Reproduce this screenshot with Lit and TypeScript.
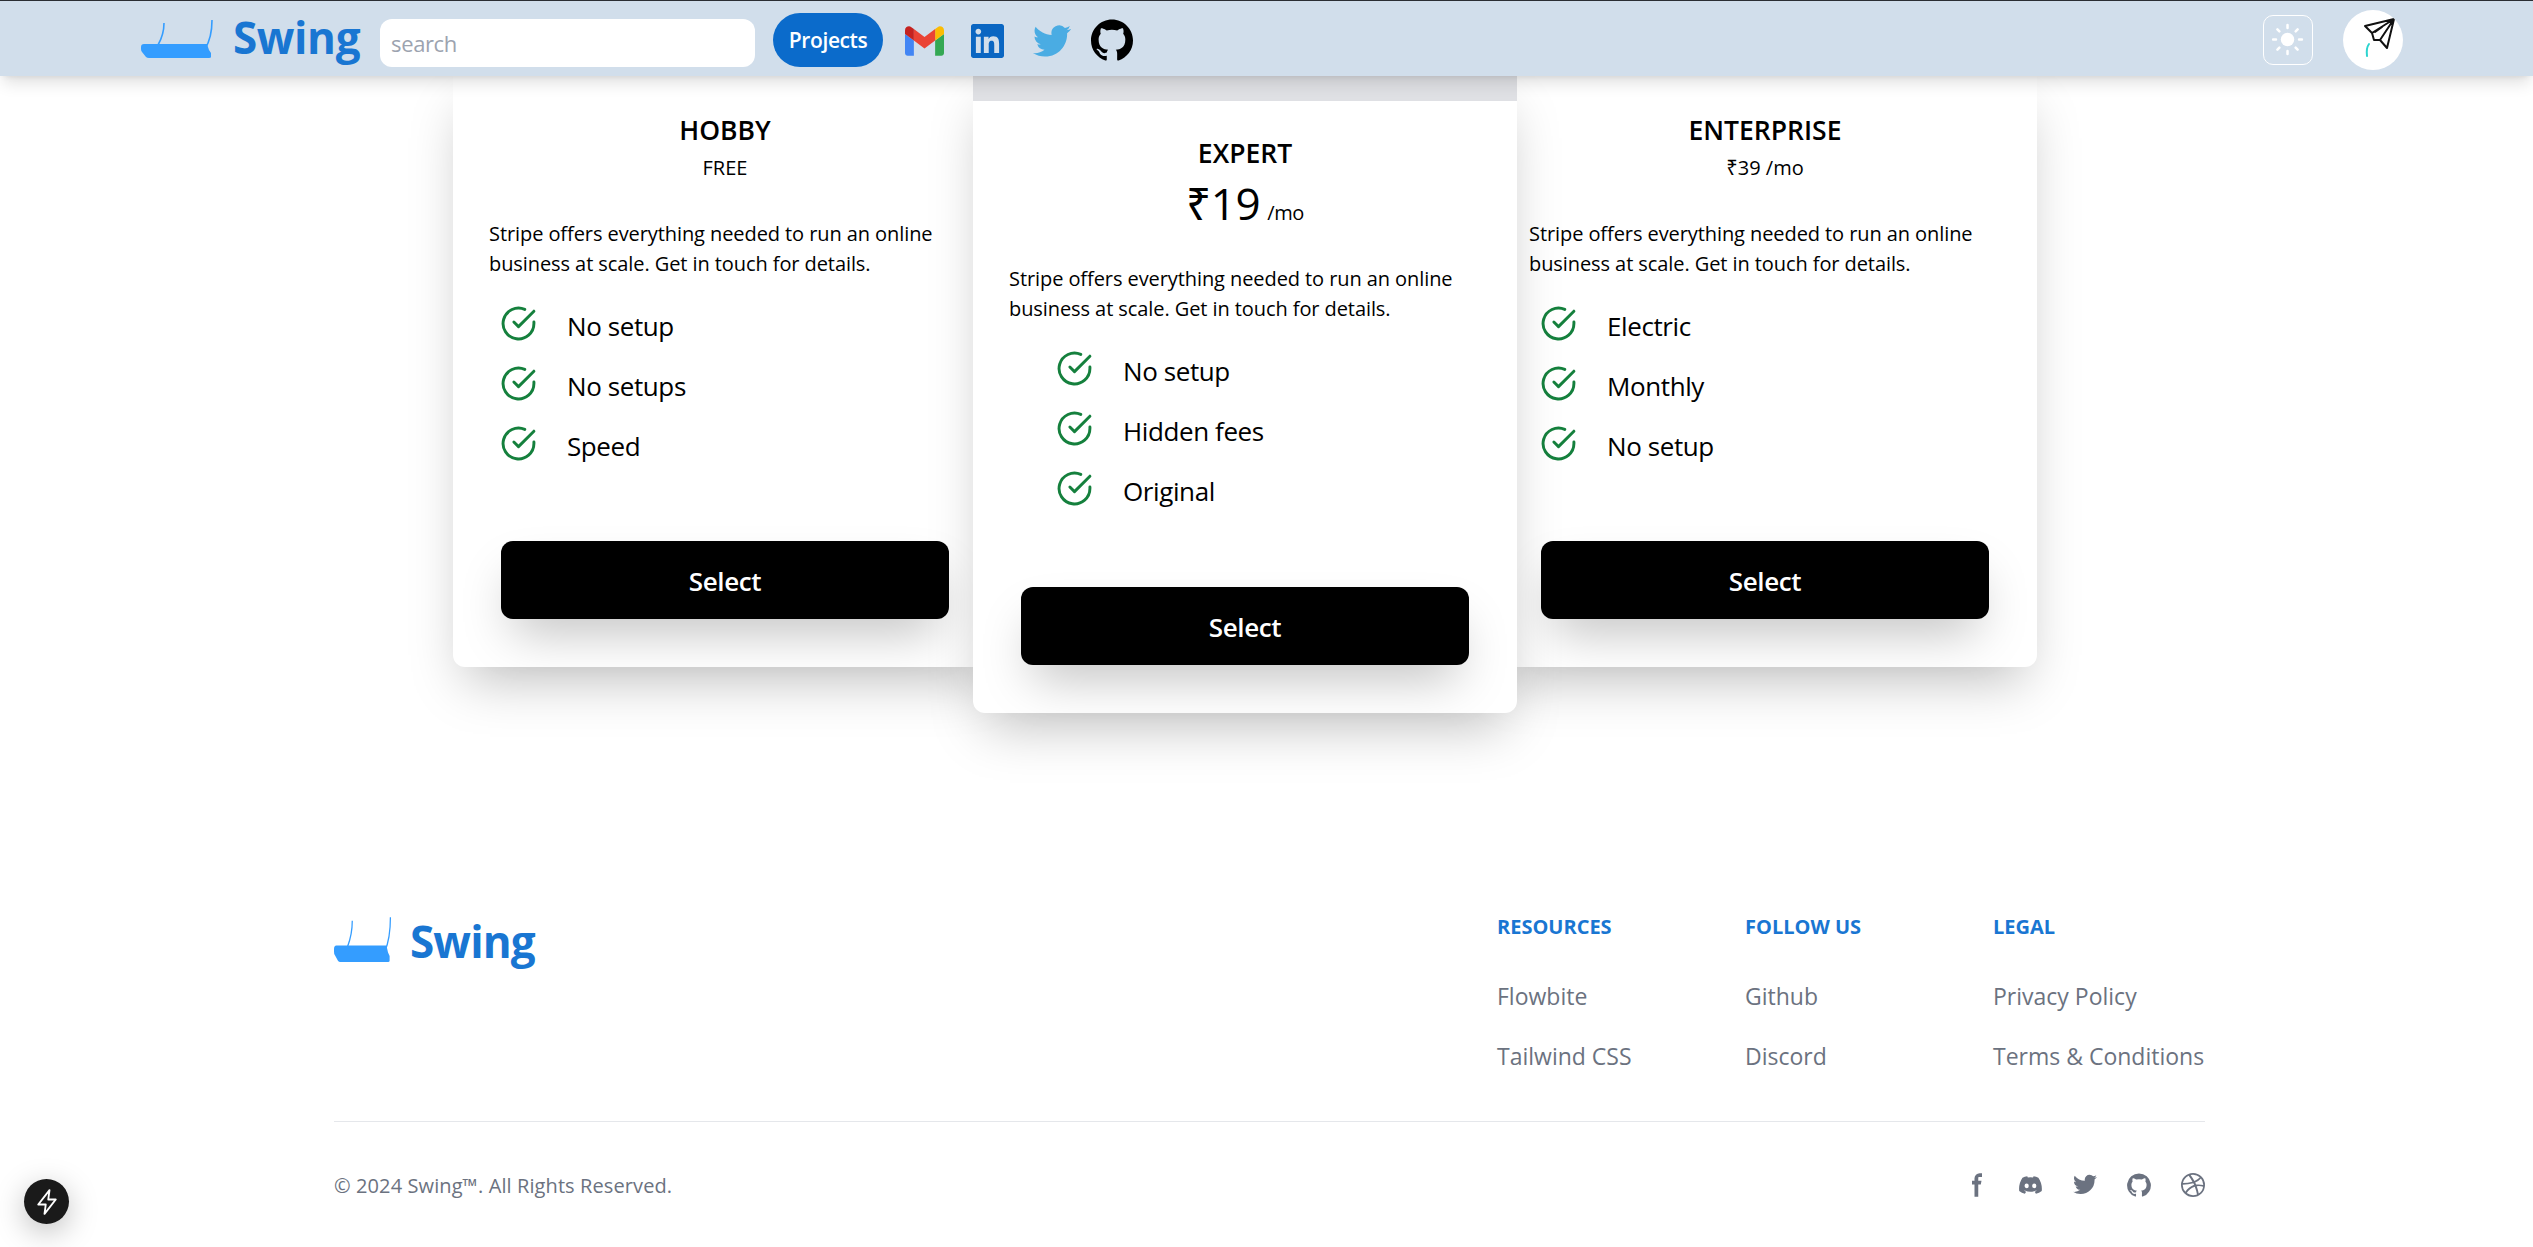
import { LitElement, html, css, svg } from "lit";
import { customElement } from "lit/decorators.js";

const check = html`<svg class="check" viewBox="0 0 24 24" fill="none" stroke="currentColor" stroke-width="1.9" stroke-linecap="round" stroke-linejoin="round"><path d="M22 11.08V12a10 10 0 1 1-5.93-9.14"/><polyline points="22 4 12 14.01 9 11.01"/></svg>`;

const logoShape = svg`<path fill="#349dff" d="M0 28Q0 25 3 25H66L68 31L70 34V38Q70 39 68 39H8Q6 39 5 38L1 33Q0 32 0 30Z"/><path fill="none" stroke="#349dff" stroke-width="1.6" d="M23 4C23 12 21 19 17 26M71 1C71 12 69 22 64 30"/>`;

const DESC = "Stripe offers everything needed to run an online business at scale. Get in touch for details.";

const socials = [
  { cls: "s-f", vb: "0 0 8 19", d: "M6.135 3H8V0H6.135a4.147 4.147 0 0 0-4.142 4.142V6H0v3h2v9.938h3V9h2.021l.592-3H5V3.591A.6.6 0 0 1 5.592 3h.543Z" },
  { cls: "s-o", vb: "0 0 21 16", d: "M16.942 1.556a16.3 16.3 0 0 0-4.126-1.3 12.04 12.04 0 0 0-.529 1.1 15.175 15.175 0 0 0-4.573 0 11.585 11.585 0 0 0-.535-1.1 16.274 16.274 0 0 0-4.129 1.3A17.392 17.392 0 0 0 .182 13.218a15.785 15.785 0 0 0 4.963 2.521c.41-.564.773-1.16 1.084-1.785a10.63 10.63 0 0 1-1.706-.83c.143-.106.283-.217.418-.33a11.664 11.664 0 0 0 10.118 0c.137.113.277.224.418.33-.544.328-1.116.606-1.71.832a12.52 12.52 0 0 0 1.084 1.785 16.46 16.46 0 0 0 5.064-2.595 17.286 17.286 0 0 0-2.973-11.59ZM6.678 10.813a1.941 1.941 0 0 1-1.8-2.045 1.93 1.93 0 0 1 1.8-2.047 1.919 1.919 0 0 1 1.8 2.047 1.93 1.93 0 0 1-1.8 2.045Zm6.644 0a1.94 1.94 0 0 1-1.8-2.045 1.93 1.93 0 0 1 1.8-2.047 1.918 1.918 0 0 1 1.8 2.047 1.93 1.93 0 0 1-1.8 2.045Z" },
  { cls: "s-o", vb: "0 0 20 17", d: "M20 1.892a8.178 8.178 0 0 1-2.355.635 4.074 4.074 0 0 0 1.8-2.235 8.344 8.344 0 0 1-2.605.98A4.13 4.13 0 0 0 13.85 0a4.068 4.068 0 0 0-4.1 4.038 4 4 0 0 0 .105.919A11.705 11.705 0 0 1 1.4.734a4.006 4.006 0 0 0 1.268 5.392 4.165 4.165 0 0 1-1.859-.5v.05A4.057 4.057 0 0 0 4.1 9.635a4.19 4.19 0 0 1-1.856.07 4.108 4.108 0 0 0 3.831 2.807A8.36 8.36 0 0 1 0 14.184 11.732 11.732 0 0 0 6.291 16 11.502 11.502 0 0 0 17.964 4.5c0-.177 0-.35-.012-.523A8.143 8.143 0 0 0 20 1.892Z" },
  { cls: "s-o", vb: "0 0 20 20", d: "M10 .333A9.911 9.911 0 0 0 6.866 19.65c.5.092.678-.215.678-.477 0-.237-.01-1.017-.014-1.845-2.757.6-3.338-1.169-3.338-1.169a2.627 2.627 0 0 0-1.1-1.451c-.9-.615.07-.6.07-.6a2.084 2.084 0 0 1 1.518 1.021 2.11 2.11 0 0 0 2.884.823c.044-.503.268-.973.63-1.325-2.2-.25-4.516-1.1-4.516-4.9A3.832 3.832 0 0 1 4.7 7.068a3.56 3.56 0 0 1 .095-2.623s.832-.266 2.726 1.016a9.409 9.409 0 0 1 4.962 0c1.89-1.282 2.717-1.016 2.717-1.016.366.83.402 1.768.1 2.623a3.827 3.827 0 0 1 1.02 2.659c0 3.807-2.319 4.644-4.525 4.889a2.366 2.366 0 0 1 .673 1.834c0 1.326-.012 2.394-.012 2.72 0 .263.18.572.681.475A9.911 9.911 0 0 0 10 .333Z" },
  { cls: "s-o", vb: "0 0 20 20", d: "M10 0a10 10 0 1 0 10 10A10.009 10.009 0 0 0 10 0Zm6.613 4.614a8.523 8.523 0 0 1 1.93 5.32 20.094 20.094 0 0 0-5.949-.274c-.059-.149-.122-.292-.184-.441a23.879 23.879 0 0 0-.566-1.239 11.41 11.41 0 0 0 4.769-3.366ZM8 1.707a8.821 8.821 0 0 1 2-.238 8.5 8.5 0 0 1 5.664 2.152 9.608 9.608 0 0 1-4.476 3.087A45.758 45.758 0 0 0 8 1.707ZM1.642 8.262a8.57 8.57 0 0 1 4.73-5.981A53.998 53.998 0 0 1 9.54 7.222a32.078 32.078 0 0 1-7.9 1.04h.002Zm2.01 7.46a8.51 8.51 0 0 1-2.2-5.707v-.262a31.64 31.64 0 0 0 8.777-1.219c.243.477.477.964.692 1.449-.114.032-.227.067-.336.1a13.569 13.569 0 0 0-6.942 5.636l.009.003ZM10 18.556a8.508 8.508 0 0 1-5.243-1.8 11.717 11.717 0 0 1 6.7-5.332.509.509 0 0 1 .055-.02 35.65 35.65 0 0 1 1.819 6.476 8.476 8.476 0 0 1-3.331.676Zm4.772-1.462A37.232 37.232 0 0 0 13.113 11a12.513 12.513 0 0 1 5.321.364 8.56 8.56 0 0 1-3.66 5.73h-.002Z" },
];

@customElement("app-root")
export class AppRoot extends LitElement {
  static styles = css`
    :host { display: block; height: 1247px; overflow: hidden; position: relative; background: #fff; color: #000;
      font-family: "Open Sans", "Noto Sans", sans-serif; letter-spacing: -0.025em; }
    * { box-sizing: border-box; }
    .nav { position: relative; z-index: 5; height: 76px; background: #d1deeb; border-top: 1px solid #2a2d33;
      box-shadow: 0 10px 15px -3px rgba(0,0,0,.12), 0 4px 6px -4px rgba(0,0,0,.1);
      display: flex; align-items: center; padding: 0 130px 0 141px; }
    .nav-logo { width: 73px; height: 39px; margin-top: -1px; }
    .brand { font-size: 44px; font-weight: 700; color: #1976d2; line-height: 1; }
    .nav .brand { margin: -3px 20px 0 19px; }
    .search { width: 375px; height: 48px; margin-top: 8px; border-radius: 12px; background: #fff; padding: 0 11px;
      display: flex; align-items: center; color: #9ca3af; font-size: 22px; margin-right: 18px; }
    .pill { width: 110px; height: 54px; margin-top: 2px; border-radius: 27px; background: #0b6bcb; color: #fff; font-size: 21px; font-weight: 600;
      display: flex; align-items: center; justify-content: center; margin-right: 22px; }
    .gmail { width: 39px; height: 30px; margin: 4px 27px 0 0; }
    .li { width: 33px; height: 34px; margin: 4px 29px 0 0; }
    .tw { width: 38px; height: 32px; margin: 5px 20px 0 0; }
    .gh { width: 42px; height: 42px; margin-top: 2px; }
    .spacer { flex: 1; }
    .theme { width: 50px; height: 50px; border: 1px solid #fff; border-radius: 10px; margin: 2px 30px 0 0; }
    .avatar { width: 60px; height: 60px; border-radius: 50%; background: #fff; margin-top: 2px; }

    .cards { display: flex; align-items: flex-start; padding-left: 453px; }
    .card { width: 544px; flex: none; background: #fff; border-radius: 0 0 12px 12px; box-shadow: 0 25px 50px -12px rgba(0,0,0,.25); }
    .side { padding: 36px 48px 48px 36px; height: 591px; }
    .mid { position: relative; z-index: 2; margin: 0 -24px; height: 637px; }
    .band { height: 25px; background: #dfe0e4; }
    .mid-body { padding: 34px 48px 48px 36px; }
    .head { text-align: center; margin-right: -12px; }
    .title { font-size: 26.5px; font-weight: 600; line-height: 36px; letter-spacing: 0; }
    .sub { font-size: 20px; line-height: 28px; margin-top: 6px; letter-spacing: 0; }
    .price { font-size: 44px; line-height: 64px; height: 64px; }
    .price small { font-size: 20px; line-height: 1; margin-left: -4px; }
    .desc { font-size: 20px; line-height: 30px; margin: 37px 0 17px; letter-spacing: -0.08px; }
    .mid .desc { margin-top: 29px; }
    .list { list-style: none; margin: 0; padding: 0 0 0 13px; }
    .mid .list { padding-left: 49px; }
    .row { height: 60px; display: flex; align-items: center; font-size: 26px; color: #000; }
    .check { width: 37px; height: 37px; color: #15803d; margin: -5px 30px 0 -2px; flex: none; }
    .btn { margin: 65px 0 0 12px; width: 448px; height: 78px; background: #000; color: #fff; border-radius: 12px; font-size: 26px; font-weight: 600;
      display: flex; align-items: center; justify-content: center; padding-top: 1px; box-shadow: 0 25px 50px -12px rgba(0,0,0,.25); }
    .mid .btn { margin-top: 66px; }

    .footer { margin-top: 200px; padding: 0 328px 0 334px; letter-spacing: 0; }
    .f-top { display: flex; justify-content: space-between; align-items: flex-start; height: 209px; border-bottom: 1px solid #e5e7eb; }
    .f-brand { display: flex; align-items: center; margin-top: 2px; }
    .f-logo { width: 58px; height: 46px; }
    .f-brand .brand { margin-left: 18px; margin-top: 4px; letter-spacing: -0.02em; }
    .f-cols { display: grid; grid-template-columns: repeat(3, 212px); column-gap: 36px; }
    .f-title { font-size: 20px; font-weight: 700; line-height: 28px; color: #1976d2; margin-bottom: 41px; text-transform: uppercase; }
    .f-link { font-size: 23px; font-weight: 500; line-height: 28px; color: #6b7280; margin-bottom: 32px; white-space: nowrap; }
    .f-bottom { display: flex; justify-content: space-between; align-items: center; margin-top: 50px; height: 28px; }
    .copy { font-size: 20px; color: #6b7280; line-height: 28px; letter-spacing: 0.1px; }
    .social { display: flex; align-items: center; gap: 30px; margin-top: -2px; }
    .social svg { display: block; fill: #6b7280; }
    .s-f { width: 10px; height: 24px; margin-right: 7px; }
    .s-o { width: 24px; height: 24px; }

    .dev { position: absolute; left: 24px; top: 1179px; width: 45px; height: 45px; border-radius: 50%; background: #1a1a1a;
      box-shadow: 0 8px 30px rgba(0,0,0,.25); display: flex; align-items: center; justify-content: center; }
    .dev svg { width: 30px; height: 30px; }
  `;

  private side(title: string, price: unknown, items: string[]) {
    return html`<div class="card side">
      <div class="head"><div class="title">${title}</div><div class="sub">${price}</div></div>
      <p class="desc">${DESC}</p>
      <ul class="list">${items.map((i) => html`<li class="row">${check}${i}</li>`)}</ul>
      <div class="btn">Select</div>
    </div>`;
  }

  render() {
    return html`
      <div class="nav">
        <svg class="nav-logo" viewBox="0 0 73 39">${logoShape}</svg>
        <div class="brand">Swing</div>
        <div class="search">search</div>
        <div class="pill">Projects</div>
        <svg class="gmail" viewBox="52 42 88 66"><path fill="#4285f4" d="M58 108h14V74L52 59v43c0 3.32 2.69 6 6 6"/><path fill="#34a853" d="M120 108h14c3.32 0 6-2.69 6-6V59l-20 15"/><path fill="#fbbc04" d="M120 48v26l20-15v-8c0-7.42-8.47-11.65-14.4-7.2"/><path fill="#ea4335" d="M72 74V48l24 18 24-18v26L96 92"/><path fill="#c5221f" d="M52 51v8l20 15V48l-5.6-4.2c-5.94-4.45-14.4-.22-14.4 7.2"/></svg>
        <svg class="li" viewBox="0 0 24 24" preserveAspectRatio="none"><path fill="#0a66c2" d="M20.447 20.452h-3.554v-5.569c0-1.328-.027-3.037-1.852-3.037-1.853 0-2.136 1.445-2.136 2.939v5.667H9.351V9h3.414v1.561h.046c.477-.9 1.637-1.85 3.37-1.85 3.601 0 4.267 2.37 4.267 5.455v6.286zM5.337 7.433c-1.144 0-2.063-.926-2.063-2.065 0-1.138.92-2.063 2.063-2.063 1.14 0 2.064.925 2.064 2.063 0 1.139-.925 2.065-2.064 2.065zm1.782 13.019H3.555V9h3.564v11.452zM22.225 0H1.771C.792 0 0 .774 0 1.729v20.542C0 23.227.792 24 1.771 24h20.451C23.2 24 24 23.227 24 22.271V1.729C24 .774 23.2 0 22.222 0h.003z"/></svg>
        <svg class="tw" viewBox="0 2 24 20" preserveAspectRatio="none"><path fill="#4aace3" d="M23.953 4.57a10 10 0 01-2.825.775 4.958 4.958 0 002.163-2.723c-.951.555-2.005.959-3.127 1.184a4.92 4.92 0 00-8.384 4.482C7.69 8.095 4.067 6.13 1.64 3.162a4.822 4.822 0 00-.666 2.475c0 1.71.87 3.213 2.188 4.096a4.904 4.904 0 01-2.228-.616v.06a4.923 4.923 0 003.946 4.827 4.996 4.996 0 01-2.212.085 4.936 4.936 0 004.604 3.417 9.867 9.867 0 01-6.102 2.105c-.39 0-.779-.023-1.17-.067a13.995 13.995 0 007.557 2.209c9.053 0 13.998-7.496 13.998-13.985 0-.21 0-.42-.015-.63A9.935 9.935 0 0024 4.59z"/></svg>
        <svg class="gh" viewBox="0 0 24 24"><path fill="#000" d="M12 .297c-6.63 0-12 5.373-12 12 0 5.303 3.438 9.8 8.205 11.385.6.113.82-.258.82-.577 0-.285-.01-1.04-.015-2.04-3.338.724-4.042-1.61-4.042-1.61C4.422 18.07 3.633 17.7 3.633 17.7c-1.087-.744.084-.729.084-.729 1.205.084 1.838 1.236 1.838 1.236 1.07 1.835 2.809 1.305 3.495.998.108-.776.417-1.305.76-1.605-2.665-.3-5.466-1.332-5.466-5.93 0-1.31.465-2.38 1.235-3.22-.135-.303-.54-1.523.105-3.176 0 0 1.005-.322 3.3 1.23.96-.267 1.98-.399 3-.405 1.02.006 2.04.138 3 .405 2.28-1.552 3.285-1.23 3.285-1.23.645 1.653.24 2.873.12 3.176.765.84 1.23 1.91 1.23 3.22 0 4.61-2.805 5.625-5.475 5.92.42.36.81 1.096.81 2.22 0 1.606-.015 2.896-.015 3.286 0 .315.21.69.825.57C20.565 22.092 24 17.592 24 12.297c0-6.627-5.373-12-12-12"/></svg>
        <div class="spacer"></div>
        <svg class="theme" viewBox="0 0 50 50" fill="none" stroke="#fff" stroke-width="2.6" stroke-linecap="round">
          <circle cx="24.5" cy="24.5" r="7" fill="#fff" stroke="none"/>
          <path d="M24.5 9.5v3M24.5 36.5v3M9.5 24.5h3M36.5 24.5h3M14 14l2 2M33 33l2 2M35 14l-2 2M16 33l-2 2"/>
        </svg>
        <svg class="avatar" viewBox="0 0 60 60" fill="none" stroke-linecap="round" stroke-linejoin="round">
          <path stroke="#111" stroke-width="2" d="M51 9L22 16L29 23L31 30H37L44 38ZM51 9L29 23M51 9L37 30M39 17L32 22"/>
          <path stroke="#2dd4cf" stroke-width="2" d="M26 34Q23 38 24 46"/>
        </svg>
      </div>

      <div class="cards">
        ${this.side("HOBBY", "FREE", ["No setup", "No setups", "Speed"])}
        <div class="card mid">
          <div class="band"></div>
          <div class="mid-body">
            <div class="head"><div class="title">EXPERT</div><div class="price">₹19 <small>/mo</small></div></div>
            <p class="desc">${DESC}</p>
            <ul class="list">${["No setup", "Hidden fees", "Original"].map((i) => html`<li class="row">${check}${i}</li>`)}</ul>
            <div class="btn">Select</div>
          </div>
        </div>
        ${this.side("ENTERPRISE", "₹39 /mo", ["Electric", "Monthly", "No setup"])}
      </div>

      <div class="footer">
        <div class="f-top">
          <div class="f-brand">
            <svg class="f-logo" viewBox="0 0 73 39" preserveAspectRatio="none">${logoShape}</svg>
            <div class="brand">Swing</div>
          </div>
          <div class="f-cols">
            <div><div class="f-title">Resources</div><div class="f-link">Flowbite</div><div class="f-link">Tailwind CSS</div></div>
            <div><div class="f-title">Follow us</div><div class="f-link">Github</div><div class="f-link">Discord</div></div>
            <div><div class="f-title">Legal</div><div class="f-link">Privacy Policy</div><div class="f-link">Terms &amp; Conditions</div></div>
          </div>
        </div>
        <div class="f-bottom">
          <div class="copy">© 2024 Swing™. All Rights Reserved.</div>
          <div class="social">${socials.map((s) => html`<svg class=${s.cls} viewBox=${s.vb}><path fill-rule="evenodd" d=${s.d}/></svg>`)}</div>
        </div>
      </div>

      <div class="dev"><svg viewBox="0 0 24 24" fill="none" stroke="#fff" stroke-width="1.5" stroke-linejoin="round"><path d="M14 2.5L5 14h6l-1 7.5L19 10h-6z"/></svg></div>
    `;
  }
}
